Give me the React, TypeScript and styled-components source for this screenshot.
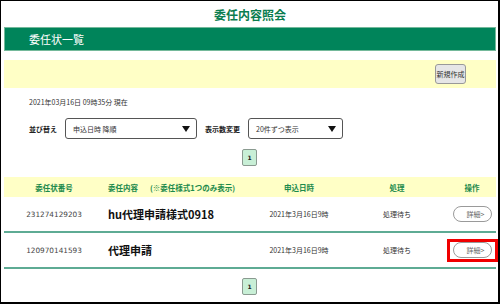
import React from "react";
import styled, { createGlobalStyle } from "styled-components";

const GlobalStyle = createGlobalStyle`
  html, body {
    margin: 0;
    padding: 0;
    background: #ffffff;
  }
  body {
    font-family: "Noto Sans CJK JP", "Noto Sans", sans-serif;
    color: #333;
  }
`;

const Frame = styled.div`
  width: 500px;
  height: 304px;
  box-sizing: border-box;
  border: 1px solid #000;
  border-right-width: 2px;
  border-bottom-width: 2px;
  padding: 0 2px 0 3px;
  overflow: hidden;
  display: flex;
  flex-direction: column;
`;

const PageTitle = styled.h1`
  margin: 0;
  height: 26px;
  display: flex;
  align-items: center;
  justify-content: center;
  font-size: 12px;
  font-weight: 700;
  color: #0b7d4f;
`;

const SectionBar = styled.div`
  height: 24px;
  box-sizing: border-box;
  background: #00845a;
  border: 1px solid #74b99b;
  display: flex;
  align-items: center;
  padding-left: 24px;
  color: #fff;
  font-size: 11px;
`;

const ActionBar = styled.div`
  margin-top: 9px;
  height: 28px;
  background: #ffffc6;
  display: flex;
  align-items: center;
  justify-content: flex-end;
  padding-right: 30px;
`;

const GrayButton = styled.button`
  height: 20px;
  width: 31px;
  padding: 0;
  box-sizing: border-box;
  border: 1px solid #999;
  border-radius: 3px;
  background: #e6e6e6;
  font-family: inherit;
  font-size: 7px;
  color: #333;
`;

const Timestamp = styled.div`
  margin-top: 8px;
  padding-left: 25px;
  font-size: 7px;
  line-height: 12px;
  color: #333;
`;

const FilterRow = styled.div`
  margin-top: 10px;
  padding-left: 25px;
  display: flex;
  align-items: center;
  height: 21px;
`;

const FilterLabel = styled.span<{ $gap: number }>`
  font-size: 7px;
  font-weight: 700;
  color: #222;
  margin-right: ${(p) => p.$gap}px;
`;

const SelectBox = styled.div<{ $width: number }>`
  width: ${(p) => p.$width}px;
  height: 21px;
  box-sizing: border-box;
  border: 1px solid #555;
  border-radius: 3px;
  background: #fff;
  display: flex;
  align-items: center;
  justify-content: space-between;
  padding: 0 6px 0 7px;
  font-size: 7px;
  color: #333;
  margin-right: 8px;
`;

const Pager = styled.div<{ $top: number }>`
  margin-top: ${(p) => p.$top}px;
  display: flex;
  justify-content: center;
  padding-right: 1px;
`;

const PageButton = styled.span`
  width: 15px;
  height: 17px;
  box-sizing: border-box;
  border: 1px solid #8a9a90;
  border-radius: 2px;
  background: #c8efd6;
  display: flex;
  align-items: center;
  justify-content: center;
  font-family: "DejaVu Sans", sans-serif;
  font-size: 6px;
  font-weight: 700;
  color: #222;
`;

const columns = "100px 151px 88px 108px 42px 1fr";

const HeadRow = styled.div`
  margin-top: 11px;
  height: 20px;
  background: #ffffc6;
  display: grid;
  grid-template-columns: ${columns};
  align-items: center;
  font-size: 7.5px;
  font-weight: 700;
  color: #1b8a4c;
`;

const HeadCell = styled.div<{ $align?: string }>`
  text-align: ${(p) => p.$align || "center"};
  display: flex;
  justify-content: ${(p) => (p.$align === "left" ? "flex-start" : "center")};
  gap: 12px;
  padding-left: ${(p) => (p.$align === "left" ? "4px" : "0")};
  white-space: nowrap;
`;

const DataRow = styled.div`
  height: 34px;
  display: grid;
  grid-template-columns: ${columns};
  align-items: center;
  border-bottom: 2px solid #5eab94;
  font-size: 7px;
  color: #333;
`;

const NumberCell = styled.div`
  text-align: center;
  font-family: "DejaVu Sans", sans-serif;
  font-size: 7.3px;
  color: #444;
`;

const TitleCell = styled.div`
  padding-left: 4px;
  font-size: 11px;
  font-weight: 700;
  color: #111;
  white-space: nowrap;
`;

const PlainCell = styled.div`
  text-align: center;
  white-space: nowrap;
`;

const ButtonCell = styled.div`
  display: flex;
  justify-content: center;
`;

const DetailButton = styled.span<{ $highlight?: boolean }>`
  position: relative;
  width: 39px;
  height: 16px;
  box-sizing: border-box;
  border: 1px solid #9a9a9a;
  border-radius: 8px;
  background: #fff;
  display: flex;
  align-items: center;
  justify-content: flex-end;
  padding-right: 6px;
  font-size: 7px;
  color: #666;

  &::after {
    content: "";
    display: ${(p) => (p.$highlight ? "block" : "none")};
    position: absolute;
    top: -4px;
    bottom: -5px;
    left: -7px;
    right: -7px;
    border: 3px solid #f00000;
  }
`;

const Arrow = () => (
  <svg width="8" height="6" viewBox="0 0 8 6">
    <polygon points="0,0 8,0 4,6" fill="#111" />
  </svg>
);

const rows = [
  { no: "231274129203", title: "hu代理申請様式0918", date: "2021年3月16日9時", status: "処理待ち" },
  { no: "120970141593", title: "代理申請", date: "2021年3月16日9時", status: "処理待ち", highlight: true },
];

export default function App() {
  return (
    <Frame>
      <GlobalStyle />
      <PageTitle>委任内容照会</PageTitle>
      <SectionBar>委任状一覧</SectionBar>
      <ActionBar>
        <GrayButton>新規作成</GrayButton>
      </ActionBar>
      <Timestamp>2021年03月16日 09時35分 現在</Timestamp>
      <FilterRow>
        <FilterLabel $gap={8}>並び替え</FilterLabel>
        <SelectBox $width={132}>
          <span>申込日時 降順</span>
          <Arrow />
        </SelectBox>
        <FilterLabel $gap={8}>表示数変更</FilterLabel>
        <SelectBox $width={95}>
          <span>20件ずつ表示</span>
          <Arrow />
        </SelectBox>
      </FilterRow>
      <Pager $top={10}>
        <PageButton>1</PageButton>
      </Pager>
      <HeadRow>
        <HeadCell>委任状番号</HeadCell>
        <HeadCell $align="left">
          <span>委任内容</span>
          <span>(※委任様式1つのみ表示)</span>
        </HeadCell>
        <HeadCell>申込日時</HeadCell>
        <HeadCell>処理</HeadCell>
        <HeadCell>操作</HeadCell>
      </HeadRow>
      {rows.map((r) => (
        <DataRow key={r.no}>
          <NumberCell>{r.no}</NumberCell>
          <TitleCell>{r.title}</TitleCell>
          <PlainCell>{r.date}</PlainCell>
          <PlainCell>{r.status}</PlainCell>
          <ButtonCell>
            <DetailButton $highlight={r.highlight}>詳細&gt;</DetailButton>
          </ButtonCell>
        </DataRow>
      ))}
      <Pager $top={9}>
        <PageButton>1</PageButton>
      </Pager>
    </Frame>
  );
}
